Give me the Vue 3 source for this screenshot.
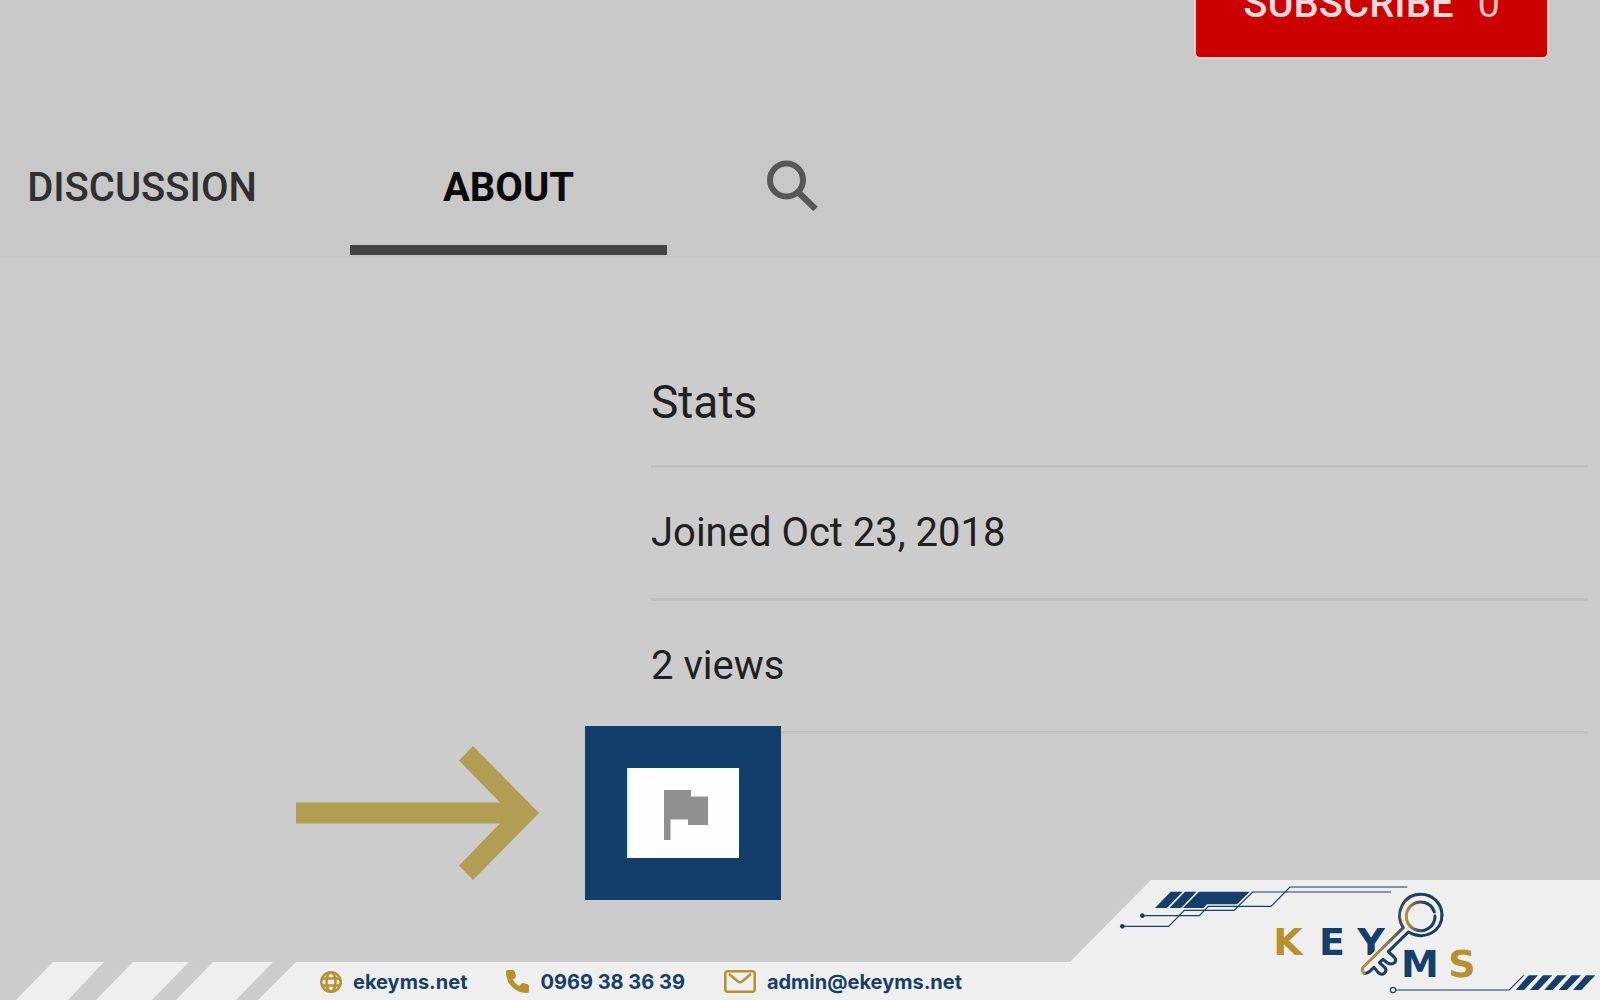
<script setup>
const stats = ['Joined Oct 23, 2018', '2 views']
const stripes = [0, 43, 86, 129, 172]
</script>

<template>
  <div class="page">
    <header class="channel-header">
      <button class="subscribe" type="button">
        <span>SUBSCRIBE</span><span class="count">0</span>
      </button>
      <nav class="tabs">
        <a class="tab discussion" href="#discussion">DISCUSSION</a>
        <a class="tab about" href="#about" aria-current="page">ABOUT</a>
        <button class="search" type="button" aria-label="Search">
          <svg width="52" height="52" viewBox="0 0 52 52" fill="none" stroke="#575757">
            <circle cx="19.5" cy="20" r="16.5" stroke-width="6" />
            <path d="M30 31L48.500 49" stroke-width="6.500" />
          </svg>
        </button>
      </nav>
    </header>

    <main>
      <section class="stats">
        <h2>Stats</h2>
        <p v-for="item in stats" :key="item">{{ item }}</p>
      </section>
      <div class="callout">
        <svg class="arrow" width="243" height="134" viewBox="0 0 243 134" aria-hidden="true">
          <path fill="#b29e53" d="M0 56.500H204L163 14.500L177 0L243 67L177 134L163 119.500L204 77.500H0Z" />
        </svg>
        <button class="report" type="button" aria-label="Report user">
          <svg width="44" height="51" viewBox="0 0 44 51" aria-hidden="true">
            <path fill="#90908e" d="M0 0H27V6.500H44V35H24V29.500H6.500V50H0Z" />
          </svg>
        </button>
      </div>
    </main>

    <footer>
      <svg class="slashes" width="296" height="38" viewBox="0 0 296 38" fill="#efefef" aria-hidden="true">
        <path d="M53 0H104L68 38H16ZM133 0H189L152 38H96ZM213 0H273L236 38H176ZM296 0V38H258Z" />
      </svg>
      <address class="contacts">
        <a href="https://ekeyms.net">
          <svg width="22" height="22" viewBox="0 0 22 22" fill="none" stroke="#b8902f" stroke-width="2.500" aria-hidden="true">
            <circle cx="11" cy="11" r="9.700" />
            <ellipse cx="11" cy="11" rx="4.500" ry="9.700" />
            <path d="M2 7.500H20M2 14.500H20" />
          </svg>
          ekeyms.net
        </a>
        <a href="tel:0969383639">
          <svg width="23" height="23" viewBox="0 0 23 23" aria-hidden="true">
            <path fill="#b8902f" d="M2 0H7Q8.500 0 9 2L10 6Q10 8 7 9.500Q9 14 13.500 16Q15 13 17 13L21 14Q23 14.500 23 16V21Q23 23 21 23C9 23 0 14 0 2Q0 0 2 0Z" />
          </svg>
          0969 38 36 39
        </a>
        <a href="mailto:admin@ekeyms.net">
          <svg width="32" height="23" viewBox="0 0 32 23" fill="none" stroke="#b8902f" stroke-width="2.500" stroke-linejoin="round" aria-hidden="true">
            <rect x="1.300" y="1.300" width="29.400" height="20.400" rx="2.500" />
            <path d="M5 4L14 11.500Q16 13 18 11.500L27 4" />
          </svg>
          admin@ekeyms.net
        </a>
      </address>
      <svg class="brand" width="530" height="120" viewBox="0 0 530 120" role="img" aria-label="KEYMS">
        <defs>
          <linearGradient id="shaft" gradientUnits="userSpaceOnUse" x1="335" y1="270" x2="560" y2="80">
            <stop offset="0" stop-color="#b8902f" />
            <stop offset=".3" stop-color="#9b8053" />
            <stop offset=".6" stop-color="#4a4c50" />
            <stop offset="1" stop-color="#153e6b" />
          </linearGradient>
          <linearGradient id="ring" gradientUnits="userSpaceOnUse" x1="470" y1="110" x2="530" y2="110">
            <stop offset="0" stop-color="#b8902f" />
            <stop offset=".5" stop-color="#56565a" />
            <stop offset="1" stop-color="#153e6b" />
          </linearGradient>
        </defs>
        <path fill="#efefef" d="M81 0H530V120H0V82Z" />
        <g transform="translate(30 -20) scale(.33333)">
          <path fill="#153e6b" d="M165 144L212 95H248L201 144ZM208 144L255 95H290L243 144ZM249 144L297 95H449L411 133H321L311 144Z" />
          <g fill="none" stroke="#153e6b" stroke-width="3.500">
            <path d="M127 167H298L325 139H513L570 81H922" />
            <path d="M67 199H206L253 151H402L458 96H873" />
            <circle cx="879" cy="390" r="8" />
            <path d="M888 390H1228L1271 346" />
          </g>
          <circle cx="127" cy="167" r="7" fill="#153e6b" />
          <circle cx="67" cy="199" r="7" fill="#153e6b" />
          <path v-for="x in stripes" :key="x" fill="#153e6b" :transform="`translate(${x})`" d="M1247 390L1286 346H1314L1272 390Z" />
        </g>
        <g class="letters">
          <text class="gold" x="218" y="75">K</text>
          <text x="262" y="75">E</text>
          <text x="301" y="75">Y</text>
          <text x="350" y="97">M</text>
          <text class="gold" x="392" y="97">S</text>
        </g>
        <g transform="translate(180) scale(.33333)" fill="none" stroke-linecap="round" stroke-linejoin="round">
          <path stroke="#efefef" stroke-width="34" d="M455 155L350 262" />
          <g stroke-width="9">
            <path stroke="#153e6b" d="M342 279Q350 282 358 275L372 262L385 278Q394 287 404 279Q412 270 404 262L388 248L399 238L413 249Q424 256 434 248Q440 240 434 233L415 215L475 156C525 185 576 152 576 106" />
            <path stroke="url(#shaft)" d="M342 279Q332 272 340 261L460 143C431 102 460 43 512 43C548 43 576 70 576 106" />
            <path stroke="url(#ring)" d="M553 96A43 43 0 1 0 555 108" />
          </g>
        </g>
      </svg>
    </footer>
  </div>
</template>

<style>
body {
  margin: 0;
  background: #ccc;
}
</style>

<style scoped>
.page {
  display: flex;
  flex-direction: column;
  min-height: 100vh;
  overflow: hidden;
  background: #ccc;
  color: #202020;
  font-family: Roboto, "Liberation Sans", sans-serif;
  font-size: 40px;
  line-height: 48px;
}

button {
  border: 0;
  padding: 0;
  background: none;
  color: inherit;
  font: inherit;
  cursor: pointer;
}

a {
  color: inherit;
  text-decoration: none;
}

svg {
  display: block;
  flex: none;
}

.channel-header {
  display: flex;
  flex-direction: column;
  padding-bottom: 3px;
  background: #c8c8c8;
}

.subscribe {
  display: flex;
  align-items: center;
  align-self: flex-end;
  gap: 24px;
  height: 106px;
  margin: -49px 53px 0 0;
  padding: 0 47px;
  border-radius: 4px;
  background: #c00;
  box-shadow: 0 0 0 2px #f0cccc;
  color: #fadada;
  font-weight: 500;
}

.count {
  color: #f2c2c2;
  font-weight: 400;
}

.tabs {
  display: flex;
  align-items: flex-start;
  gap: 66px;
  padding-top: 103px;
}

.tab {
  padding: 4px 0 33px;
  border-bottom: 10px solid transparent;
  text-align: center;
}

.discussion {
  width: 284px;
  color: #303030;
  font-weight: 500;
}

.about {
  width: 317px;
  border-color: #444;
  color: #0a0a0a;
  font-weight: 700;
}

.search {
  margin-left: 34px;
}

.stats {
  margin: 0 12px 0 651px;
  padding-top: 118px;
}

.stats h2,
.stats p {
  margin: 0;
  border-bottom: 3px solid #c0c0c0;
  font-weight: 400;
}

.stats h2 {
  padding-bottom: 37px;
  font-size: 46px;
  line-height: 52px;
}

.stats p {
  padding: 41px 0;
}

.callout {
  position: relative;
  display: flex;
  align-items: center;
  gap: 46px;
  margin: -8px 0 0 296px;
}

.report {
  display: grid;
  place-items: center;
  box-sizing: border-box;
  width: 196px;
  height: 174px;
  border: 42px solid #133e6c;
  padding: 4px 0 0 6px;
  background: #fefefc;
  box-shadow: inset 2px 0 #c4fbcb;
}

main {
  flex: 1;
}

footer {
  display: flex;
  align-items: flex-end;
  margin-top: -20px;
}

.contacts {
  display: flex;
  flex: 1;
  align-items: center;
  gap: 39px;
  box-sizing: border-box;
  height: 38px;
  padding: 1px 0 0 24px;
  background: #efefef;
  color: #153e6b;
  font: 700 20px/24px Inter, "Liberation Sans", sans-serif;
  white-space: nowrap;
}

.contacts a {
  display: flex;
  align-items: center;
  gap: 11px;
}

.letters {
  fill: #153e6b;
  font: 700 38px "DejaVu Sans", sans-serif;
  text-anchor: middle;
}

.gold {
  fill: #b8902f;
}
</style>
